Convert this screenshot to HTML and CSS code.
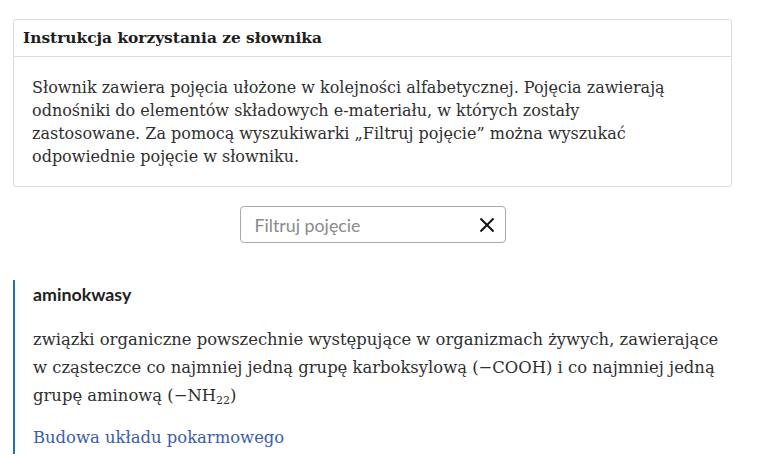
FILE: index.html
```html
<!DOCTYPE html>
<html lang="pl">
<head>
<meta charset="utf-8">
<title>Słownik</title>
<link rel="stylesheet" href="styles.css">
</head>
<body>
<main class="page">
  <section class="panel">
    <h2 class="panel-head">Instrukcja korzystania ze słownika</h2>
    <div class="panel-body">
      <p>Słownik zawiera pojęcia ułożone w kolejności alfabetycznej. Pojęcia zawierają odnośniki do elementów składowych e-materiału, w których zostały zastosowane. Za pomocą wyszukiwarki „Filtruj pojęcie” można wyszukać odpowiednie pojęcie w słowniku.</p>
    </div>
  </section>

  <div class="search-row">
    <div class="search">
      <input class="search-input" type="text" placeholder="Filtruj pojęcie">
      <button class="search-clear" aria-label="Wyczyść">
        <svg width="16" height="16" viewBox="0 0 16 16"><path d="M1.5 1.5 L14.5 14.5 M14.5 1.5 L1.5 14.5" stroke="#111" stroke-width="2" fill="none"/></svg>
      </button>
    </div>
  </div>

  <article class="entry">
    <h3 class="term">aminokwasy</h3>
    <p class="definition">związki organiczne powszechnie występujące w organizmach żywych, zawierające w cząsteczce co najmniej jedną grupę karboksylową (−COOH) i co najmniej jedną grupę aminową (−NH<sub>22</sub>)</p>
    <a class="link" href="#">Budowa układu pokarmowego</a>
  </article>
</main>
</body>
</html>
```
FILE: styles.css
```css
* { box-sizing: border-box; }
html, body { margin: 0; padding: 0; background: #fff; }
body { font-family: "DejaVu Serif", serif; color: #333; }

.page {
  width: 719px;
  margin: 19px 0 0 13px;
}

.panel {
  border: 1px solid #dcdcdc;
  border-radius: 3px;
}
.panel-head {
  margin: 0;
  padding: 0 9px;
  height: 37px;
  line-height: 36px;
  font-size: 15.4px;
  font-weight: bold;
  color: #1e1e1e;
  border-bottom: 1px solid #dcdcdc;
}
.panel-body {
  padding: 19px 40px 18px 18px;
}
.panel-body p {
  margin: 0;
  font-size: 16px;
  line-height: 23px;
  color: #2f2f2f;
}

.search-row {
  display: flex;
  justify-content: center;
  margin-top: 19px;
}
.search {
  width: 266px;
  height: 37px;
  border: 1px solid #aaa;
  border-radius: 4px;
  display: flex;
  align-items: center;
  padding: 0 10px 0 14px;
}
.search-input {
  flex: 1;
  min-width: 0;
  border: 0;
  outline: none;
  padding: 0;
  font-family: Lato, sans-serif;
  font-size: 17.8px;
  color: #333;
  background: transparent;
}
.search-input::placeholder { color: #8a8a8a; }
.search-clear {
  border: 0;
  background: none;
  padding: 0;
  width: 16px;
  height: 16px;
  display: flex;
}

.entry {
  margin-top: 37px;
  border-left: 2px solid #1f72b6;
  padding-left: 18px;
}
.term {
  margin: 0;
  font-family: Lato, sans-serif;
  font-weight: bold;
  font-size: 17.8px;
  line-height: 28px;
  color: #1e1e1e;
}
.definition {
  margin: 18px 0 0;
  font-size: 16.4px;
  line-height: 28px;
  color: #2f2f2f;
}
.definition sub {
  font-size: 11px;
  vertical-align: -3px;
  line-height: 1;
}
.link {
  display: block;
  margin-top: 14px;
  font-size: 16.4px;
  line-height: 28px;
  color: #3b5ea6;
  text-decoration: none;
  padding-bottom: 2px;
}
```
